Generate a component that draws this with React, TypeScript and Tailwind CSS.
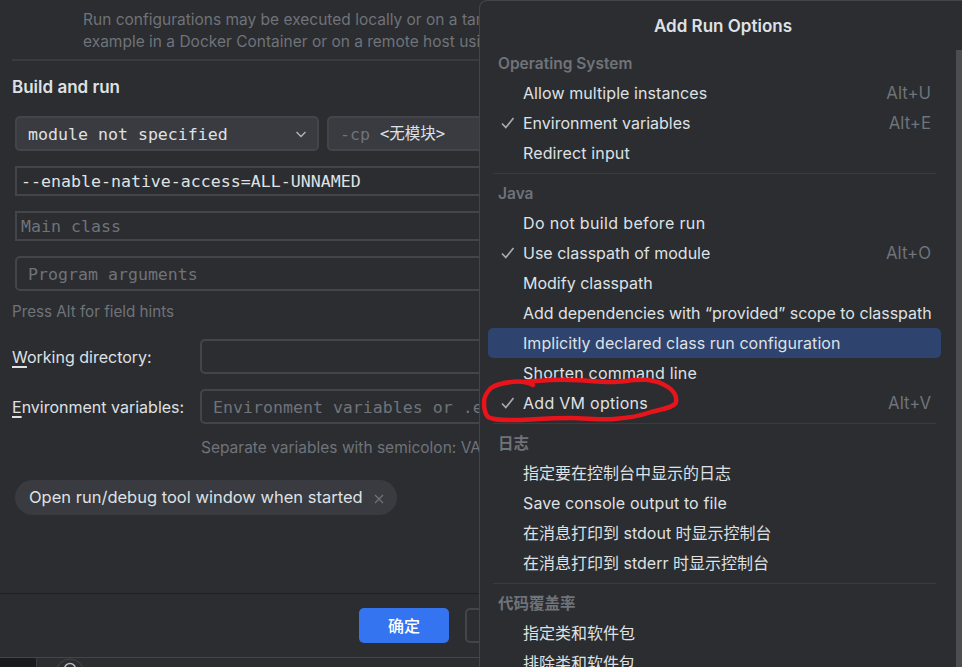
const sans = "font-['Inter','Noto_Sans_CJK_SC',sans-serif]";
const mono = "font-['DejaVu_Sans_Mono','Noto_Sans_CJK_SC',monospace]";

type Row =
  | { kind: "head"; label: string }
  | { kind: "sep" }
  | { kind: "item"; label: string; checked?: boolean; keys?: string; selected?: boolean; track?: string };

const rows: Row[] = [
  { kind: "head", label: "Operating System" },
  { kind: "item", label: "Allow multiple instances", keys: "Alt+U", track: "tracking-[0.08px]" },
  { kind: "item", label: "Environment variables", keys: "Alt+E", checked: true },
  { kind: "item", label: "Redirect input", track: "tracking-[0.14px]" },
  { kind: "sep" },
  { kind: "head", label: "Java" },
  { kind: "item", label: "Do not build before run", track: "tracking-[0.35px]" },
  { kind: "item", label: "Use classpath of module", keys: "Alt+O", checked: true },
  { kind: "item", label: "Modify classpath" },
  { kind: "item", label: "Add dependencies with “provided” scope to classpath", track: "tracking-[-0.04px]" },
  { kind: "item", label: "Implicitly declared class run configuration", selected: true, track: "tracking-[0.05px]" },
  { kind: "item", label: "Shorten command line", track: "tracking-[0.2px]" },
  { kind: "item", label: "Add VM options", keys: "Alt+V", checked: true, track: "tracking-[0.28px]" },
  { kind: "sep" },
  { kind: "head", label: "日志" },
  { kind: "item", label: "指定要在控制台中显示的日志" },
  { kind: "item", label: "Save console output to file", track: "tracking-[0.11px]" },
  { kind: "item", label: "在消息打印到 stdout 时显示控制台" },
  { kind: "item", label: "在消息打印到 stderr 时显示控制台" },
  { kind: "sep" },
  { kind: "head", label: "代码覆盖率" },
  { kind: "item", label: "指定类和软件包" },
  { kind: "item", label: "排除类和软件包" },
];

function Check() {
  return (
    <svg width="14" height="14" viewBox="0 0 14 14" fill="none" className="shrink-0">
      <path d="M1 7.5 L4.8 11.5 L12.5 2" stroke="#a8abb1" strokeWidth="1.7" />
    </svg>
  );
}

function Popup() {
  return (
    <div className="relative h-[667px] w-[483px] shrink-0 overflow-hidden rounded-tl-lg border-l border-t border-[#43454a] bg-[#2b2d30]">
      <div className="flex h-[47px] items-center justify-center pl-[4px] pt-[4px] text-[17px] font-semibold text-[#dfe1e5]">
        Add Run Options
      </div>
      <div className="flex flex-col pl-[8px] pr-[21px]">
        {rows.map((row, i) => {
          if (row.kind === "sep") {
            return (
              <div key={i} className="flex h-[10px] items-center pl-[5px] pr-[5px]">
                <div className="h-px w-full bg-[#393b40]" />
              </div>
            );
          }
          if (row.kind === "head") {
            return (
              <div key={i} className="flex h-[30px] shrink-0 items-center pl-[10px] pt-[1px] text-[15.5px] font-semibold text-[#6f737a]">
                {row.label}
              </div>
            );
          }
          return (
            <div
              key={i}
              className={`flex h-[30px] shrink-0 items-center rounded-[5px] pr-[10px] text-[16px] text-[#dfe1e5] ${
                row.selected ? "bg-[#2e436e]" : ""
              }`}
            >
              <div className="flex w-[35px] shrink-0 justify-end pr-[8px]">{row.checked ? <Check /> : null}</div>
              <span className={`whitespace-nowrap ${row.track ?? ""}`}>{row.label}</span>
              {row.keys ? <span className="ml-auto pt-[2px] text-[16.8px] text-[#6f737a]">{row.keys}</span> : null}
            </div>
          );
        })}
      </div>
      <div className="absolute right-0 top-[49px] h-[620px] w-[6px] bg-[#4b4d51]" />
      <svg width="210" height="50" viewBox="0 0 210 50" fill="none" className="absolute left-0 top-[374px]">
        <path
          d="M53 10 C45 6 38 6 31 7 C22 8 15 10 11 13 C6 18 4 22 4 27 C4 33 5 39 8 42 C16 46 28 45 41 45 C60 44 75 43 91 43 C105 43 120 45 134 44 C148 43 160 41 171 37 C183 34 195 32 196 27 C197 21 194 16 188 12 C182 8 176 6 168 5 C155 4 143 7 131 7 C117 7 104 5 91 5 C75 4 60 6 44 7"
          stroke="#e8141c"
          strokeWidth="4.5"
          strokeLinecap="round"
        />
      </svg>
    </div>
  );
}

function Main() {
  const fieldBorder = "border-2 border-[#43454a]";
  return (
    <div className={`flex h-[667px] w-[479px] shrink-0 flex-col overflow-hidden bg-[#2b2d30] ${sans}`}>
      <div className="ml-[12px] flex h-[61px] w-[600px] flex-col border-b-2 border-[#393b40] pl-[71px] pt-[9px] text-[15.5px] leading-[22px] text-[#6f737a]">
        <div className="whitespace-nowrap">Run configurations may be executed locally or on a target: for</div>
        <div className="whitespace-nowrap">example in a Docker Container or on a remote host using SSH.</div>
      </div>
      <div className="pl-[12px] pt-[15px] text-[17px] font-semibold leading-[22px] text-[#dfe1e5]">Build and run</div>
      <div className="flex w-[700px] flex-col pl-[15px] pt-[18px]">
        <div className="flex gap-2">
          <div className={`flex h-[35px] w-[304px] items-center justify-between rounded-[5px] ${fieldBorder} bg-[#393b40] pl-[11px] pr-[10px] pt-[3px] ${mono} text-[16.6px] text-[#dfe1e5]`}>
            <span>module not specified</span>
            <svg width="12" height="12" viewBox="0 0 12 12" fill="none" className="-mt-[2px]">
              <path d="M1.5 4 L6 8.5 L10.5 4" stroke="#b4b8bf" strokeWidth="1.3" />
            </svg>
          </div>
          <div className={`flex h-[35px] w-[300px] items-center rounded-[5px] ${fieldBorder} bg-[#393b40] pl-[11px] pt-[3px] ${mono} text-[16.6px]`}>
            <span className="text-[#6f737a]">-cp</span>
            <span className="ml-[10px] text-[15.5px] text-[#dfe1e5]">&lt;无模块&gt;</span>
          </div>
        </div>
        <div className={`mt-[15px] flex h-[30px] items-center ${fieldBorder} pl-[4px] pt-[3px] ${mono} text-[16.6px] text-[#dfe1e5]`}>
          --enable-native-access=ALL-UNNAMED
        </div>
        <div className={`mt-[15px] flex h-[30px] items-center ${fieldBorder} pl-[4px] pt-[3px] ${mono} text-[16.6px] text-[#6f737a]`}>
          Main class
        </div>
        <div className={`mt-[15px] flex h-[35px] items-center rounded-[5px] ${fieldBorder} pl-[11px] pt-[3px] ${mono} text-[16.6px] text-[#6f737a]`}>
          Program arguments
        </div>
      </div>
      <div className="pl-[12px] pt-[10px] text-[15.2px] leading-[22px] text-[#6f737a]">Press Alt for field hints</div>
      <div className="flex w-[700px] flex-col pl-[12px] pt-[16px]">
        <div className="flex h-[35px] items-center">
          <span className="w-[188px] pt-[1px] text-[16px] text-[#dfe1e5]">
            <span className="underline decoration-2 underline-offset-[3px]">W</span>orking directory:
          </span>
          <div className={`h-[35px] flex-1 rounded-[5px] ${fieldBorder}`} />
        </div>
        <div className="mt-[15px] flex h-[35px] items-center">
          <span className="w-[188px] pt-[1px] text-[16px] text-[#dfe1e5]">
            <span className="underline decoration-2 underline-offset-[3px]">E</span>nvironment variables:
          </span>
          <div className={`flex h-[35px] flex-1 items-center rounded-[5px] ${fieldBorder} pl-[11px] pt-[3px] ${mono} text-[16.6px] text-[#6f737a]`}>
            Environment variables or .env files
          </div>
        </div>
        <div className="pl-[189px] pt-[13px] text-[15.5px] leading-[22px] whitespace-nowrap text-[#6f737a]">
          Separate variables with semicolon: VAR=value
        </div>
      </div>
      <div className="pl-[15px] pt-[21px]">
        <div className="inline-flex h-[35px] items-center rounded-full bg-[#393b40] pl-[14px] pr-[13px] text-[16.5px] whitespace-nowrap text-[#dfe1e5]">
          Open run/debug tool window when started
          <svg width="10" height="10" viewBox="0 0 10 10" fill="none" className="ml-[11px] mt-[2px]">
            <path d="M1 1 L9 9 M9 1 L1 9" stroke="#6f737a" strokeWidth="1.2" />
          </svg>
        </div>
      </div>
      <div className="mt-[78px] flex h-[64px] shrink-0 items-start gap-4 border-t border-[#1e1f22] pl-[359px] pt-[14px]">
        <div className="flex h-[35px] w-[90px] shrink-0 items-center justify-center rounded-[5px] bg-[#3574f0] text-[16px] font-medium text-white">
          确定
        </div>
        <div className="h-[35px] w-[90px] shrink-0 rounded-[5px] border-2 border-[#43454a]" />
      </div>
      <div className="flex h-[10px] shrink-0 border-t border-[#43454a] bg-[#2b2d30]">
        <div className="h-full w-[37px] border-r border-[#393b40] bg-[#1a1b1d]" />
        <svg width="30" height="10" viewBox="0 0 30 10" fill="none" className="ml-[18px]">
          <circle cx="15" cy="15" r="14" stroke="#43454a" strokeWidth="1" />
          <circle cx="15" cy="11" r="5.5" stroke="#b4b8bf" strokeWidth="1.5" />
        </svg>
      </div>
    </div>
  );
}

export default function App() {
  return (
    <div className={`flex h-[667px] w-[962px] overflow-hidden bg-[#2b2d30] ${sans}`}>
      <Main />
      <Popup />
    </div>
  );
}
